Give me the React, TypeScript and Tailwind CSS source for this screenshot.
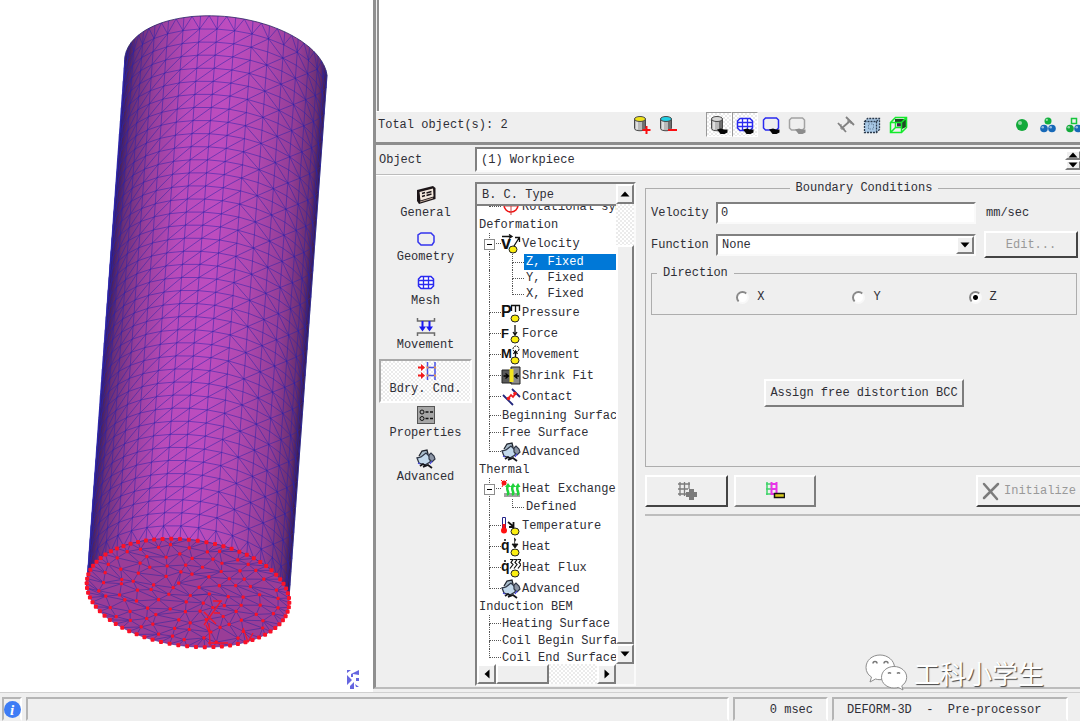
import React, { useState } from 'react';
import clsx from 'clsx';

type Point = [number, number];

const RAISED = 'border-2 border-t-white border-l-white border-r-[#7d7d7d] border-b-[#7d7d7d] bg-[#efefef]';
const SUNKEN = 'border-2 border-t-[#808080] border-l-[#808080] border-r-[#fafafa] border-b-[#fafafa]';
const DITHER = 'bg-[repeating-conic-gradient(#ffffff_0_25%,#ebebeb_0_50%)] bg-[length:4px_4px]';

/* ---------- 3D workpiece ---------- */

const ROWS = 40;
const COLS = 18;

const noise = (n: number) => {
  const v = Math.sin(n * 127.1 + 11.7) * 43758.5453;
  return v - Math.floor(v) - 0.5;
};

// h = 0 is the bottom face, h = 1 the top one
const onCylinder = (angle: number, h: number, r = 1): Point => [
  188 + 38 * h + r * (101 * Math.cos(angle) + 8 * Math.sin(angle)),
  593 - 523 * h + r * (5 * Math.cos(angle) + 54 * Math.sin(angle)),
];

const seg = (a: Point, b: Point) =>
  `M${a[0].toFixed(1)} ${a[1].toFixed(1)}L${b[0].toFixed(1)} ${b[1].toFixed(1)}`;

const outline = (points: Point[]) => `M${points.map((p) => p.map((v) => v.toFixed(1)).join(' ')).join('L')}Z`;

const arc = (h: number) => Array.from({ length: 49 }, (_, i) => onCylinder(Math.PI * (1 + i / 48), h));

const sideMesh = () => {
  const out: string[] = [];
  const at = (c: number, r: number) => onCylinder(Math.PI + (Math.PI * c) / COLS, r / ROWS);
  for (let r = 0; r < ROWS; r++) {
    for (let c = 0; c <= COLS; c++) {
      out.push(seg(at(c, r), at(c, r + 1)));
      if (c === COLS) continue;
      if (r > 0) out.push(seg(at(c, r), at(c + 1, r)));
      if (r === 0 || r === ROWS - 1) {
        const edge = r === 0 ? 0 : ROWS;
        const inner = r === 0 ? 1 : ROWS - 1;
        out.push(seg(at(c + 0.5, edge), at(c, inner)), seg(at(c + 0.5, edge), at(c + 1, inner)));
      } else if (c > 10 && (r + c) % 2 === 0) {
        out.push(seg(at(c, r + 1), at(c + 1, r)));
      } else {
        out.push(seg(at(c, r), at(c + 1, r + 1)));
      }
    }
  }
  return out.join('');
};

const RINGS = [
  { r: 1, n: 72 },
  { r: 0.87, n: 34 },
  { r: 0.7, n: 27 },
  { r: 0.53, n: 20 },
  { r: 0.36, n: 14 },
  { r: 0.19, n: 7 },
  { r: 0.02, n: 1 },
];

const ringPoints: Point[][] = RINGS.map(({ r, n }, k) =>
  Array.from({ length: n }, (_, i) => {
    const shake = k === 0 ? 0 : 1;
    const angle = ((i + shake * noise(i + k * 50) * 0.55) / n) * Math.PI * 2;
    return onCylinder(angle, 0, r + shake * noise(i * 3 + k * 91) * 0.09);
  })
);

const faceMesh = () => {
  const out: string[] = [];
  ringPoints.forEach((ring, k) => {
    ring.forEach((p, i) => out.push(seg(p, ring[(i + 1) % ring.length])));
    const inner = ringPoints[k + 1];
    if (!inner) return;
    const n = ring.length;
    const m = inner.length;
    let i = 0;
    let j = 0;
    while (i < n || j < m) {
      out.push(seg(ring[i % n], inner[j % m]));
      if ((i + 1) / n <= (j + 1) / m) i++;
      else j++;
    }
  });
  return out.join('');
};

const SIDE_OUTLINE = outline([...arc(1), ...arc(0).reverse()]);
const SIDE_MESH = sideMesh();
const FACE_MESH = faceMesh();

function Workpiece() {
  return (
    <svg width="373" height="692" viewBox="0 0 373 692" className="block" role="img" aria-label="Workpiece mesh">
      <defs>
        <linearGradient id="side" gradientUnits="userSpaceOnUse" x1="106" y1="322" x2="308" y2="337">
          <stop offset="0" stopColor="#3a1a52" />
          <stop offset="0.05" stopColor="#6b3078" />
          <stop offset="0.16" stopColor="#983f9c" />
          <stop offset="0.32" stopColor="#b84bba" />
          <stop offset="0.5" stopColor="#bd4dbf" />
          <stop offset="0.68" stopColor="#b049b0" />
          <stop offset="0.86" stopColor="#923d95" />
          <stop offset="0.96" stopColor="#6a2f70" />
          <stop offset="1" stopColor="#371a4c" />
        </linearGradient>
      </defs>
      <path d={SIDE_OUTLINE} fill="url(#side)" stroke="#2a2460" strokeWidth="0.8" />
      <path d={SIDE_MESH} fill="none" stroke="#2a22a8" strokeWidth="0.8" strokeOpacity="0.66" />
      <path d={outline(ringPoints[0])} fill="#9a3d97" />
      <path d={FACE_MESH} fill="none" stroke="#3a2a9c" strokeWidth="0.8" strokeOpacity="0.8" />
      {ringPoints.flatMap((ring, k) =>
        ring.map(([x, y], i) => (
          <rect
            key={`${k}-${i}`}
            x={x - (k ? 1.6 : 2)}
            y={y - (k ? 1.6 : 2)}
            width={k ? 3.2 : 4}
            height={k ? 3.2 : 4}
            rx="1"
            fill="#fb1128"
          />
        ))
      )}
      <path
        d="M210 646L209 623M204 612l12 12M204 625l17-24M213 601h9M214 613h6M208 643h20M243 628l5 14 5-9M209 632l-3-7"
        fill="none"
        stroke="#f3142c"
        strokeWidth="1.3"
      />
      <path
        d="M347 670h4l-4 3zM359 670v5l-6-1v3h-2v-3zM347 675l5 5-5 5zM356 678h3v3h-3zM354 682v7h-4v-3zM355 684l4 3h-3z"
        fill="#6666e0"
      />
    </svg>
  );
}

/* ---------- icons ---------- */

const Icon = ({ children }: { children: React.ReactNode }) => (
  <svg width="20" height="20" viewBox="0 0 20 20" fill="none" className="block shrink-0" aria-hidden="true">
    {children}
  </svg>
);

const Drum = ({ top }: { top: string }) => (
  <>
    <path d="M2.500 4v9.500c0 3 11 3 11 0V4z" fill="#b9b9b9" stroke="#4a4a4a" />
    <path d="M10 6v9l3-1V5z" fill="#6f6f6f" />
    <path d="M5 6.500v8" stroke="#eee" strokeWidth="1.500" />
    <ellipse cx="8" cy="4" rx="5.500" ry="2.500" fill={top} stroke="#4a4a4a" />
  </>
);

const Eye = ({ color = '#050505' }: { color?: string }) => (
  <path d="M8 14.500l4-1 3 1h3.500v3l-3 1.500h-4l-1.500-2z" fill={color} />
);

const RoundBox = ({ color }: { color: string }) => (
  <path d="M4.500 3h11l2 2v8l-2 2h-11l-2-2V5z" stroke={color} strokeWidth="1.500" />
);

const GridBox = () => (
  <>
    <path d="M5 3.500h10l2.500 2.500v7L15 15.500H5L2.500 13V6z" stroke="#2a2af0" strokeWidth="1.500" fill="#fff" />
    <path d="M2.500 7.500h15M2.500 11.500h15M7.500 3.500v12M12.500 3.500v12" stroke="#2a2af0" strokeWidth="1.300" />
  </>
);

const Ball = ({ x, y, r, color }: { x: number; y: number; r: number; color: string }) => (
  <>
    <circle cx={x} cy={y} r={r} fill={color} />
    <circle cx={x - r / 3} cy={y - r / 3} r={r / 3} fill="#fff" fillOpacity="0.55" />
  </>
);

const AddObjectIcon = () => (
  <Icon><Drum top="#efe21a" /><path d="M14.500 11v8M10.500 15h8" stroke="#fb0d10" strokeWidth="2" /></Icon>
);
const RemoveObjectIcon = () => (
  <Icon><Drum top="#22cfe4" /><path d="M10 15h9" stroke="#fb0d10" strokeWidth="2" /></Icon>
);
const ShowObjectIcon = () => <Icon><Drum top="#d8d8d8" /><Eye /></Icon>;
const ShowMeshIcon = () => <Icon><GridBox /><Eye /></Icon>;
const ShowGeometryIcon = () => <Icon><RoundBox color="#2a2af0" /><Eye /></Icon>;
const ShowNoneIcon = () => <Icon><RoundBox color="#a3a3a3" /><Eye color="#8c8c8c" /></Icon>;
const ContactLinesIcon = () => (
  <Icon><path d="M2 8l8 9M10 2l8 8M6 13l8-7" stroke="#828282" strokeWidth="1.800" /><path d="M5 9v5h4M11 6h4v3" stroke="#828282" /></Icon>
);
const SolidBoxIcon = () => (
  <Icon>
    <path d="M2.500 6.500l3-3h12v11l-3 3h-12z" fill="#a9c9e6" />
    <path d="M2.500 6.500l3-3h12v11l-3 3h-12zM2.500 6.500h12v11M14.500 6.500l3-3" stroke="#2b3a4c" strokeWidth="1.300" strokeDasharray="2 1" />
    <path d="M6.500 10v4h5V9h-5" stroke="#6b86a0" strokeDasharray="1.500 1" />
  </Icon>
);
const WireBoxIcon = () => (
  <Icon>
    <path d="M7 4h11v8l-4 2V8H7z" fill="#1d4a25" />
    <path d="M9 7.500h6l-1 4H9z" fill="#4b1b53" />
    <path d="M2.500 7.500l5-5h11v10l-5 5h-11zM2.500 7.500h11v10M13.500 7.500l5-5M7.500 8v4.500h6M7.500 12.500l-5 5" stroke="#13ea2b" strokeWidth="1.500" />
  </Icon>
);
const OneBallIcon = () => <Icon><Ball x={10} y={10} r={6} color="#12a93a" /></Icon>;
const ThreeBallsIcon = () => (
  <Icon><Ball x={10} y={6} r={3.5} color="#12b03c" /><Ball x={6} y={13.5} r={3.8} color="#1769b8" /><Ball x={14} y={13.5} r={3.8} color="#1769b8" /></Icon>
);
const BallSquareIcon = () => (
  <Icon>
    <rect x="7.500" y="3.500" width="5" height="5" stroke="#16c53d" strokeWidth="1.500" />
    <Ball x={6} y={13.5} r={3.8} color="#12a93a" /><Ball x={14} y={13.5} r={3.8} color="#1769b8" />
  </Icon>
);

const GeneralIcon = () => (
  <Icon>
    <path d="M1 5L17 1l2.500 2v11L3 19l-2-3z" fill="#1c1518" />
    <path d="M3.500 7L17 3.500l.5 8L4.500 15.500z" fill="#f4e8dc" />
    <path d="M6 8.500l3-1M10.500 8l5-1.500M6 11.500l3-1M10.500 10.500l5-1.500" stroke="#1c1518" strokeWidth="1.500" />
    <path d="M4 17l13-4" stroke="#bda89a" />
  </Icon>
);
const GeometryIcon = () => <Icon><path d="M5 4h10l3 3v6l-2 3H5l-3-3V6z" stroke="#3434ee" strokeWidth="1.500" /></Icon>;
const MeshIcon = () => <Icon><GridBox /></Icon>;
const MovementIcon = () => (
  <Icon>
    <path d="M1.500 1v3h17V1M1.500 19v-3h17v3" stroke="#6b6b6b" strokeWidth="1.500" />
    <path d="M6.500 4v7M13.500 4v7" stroke="#1a1af0" strokeWidth="2" />
    <path d="M3 9.500h7l-3.500 5zM10 9.500h7l-3.500 5z" fill="#1a1af0" />
  </Icon>
);
const BoundaryIcon = () => (
  <Icon>
    <path d="M2 6.500h4M2 14.500h4" stroke="#f21a1a" strokeWidth="2" />
    <path d="M5 3l4 3.500L5 10zM5 11l4 3.500L5 18z" fill="#f21a1a" />
    <path d="M11.500 1v18M19 1v18M11.500 6.500H19M11.500 14.500H19" stroke="#4750e6" strokeWidth="1.500" />
    <path d="M10.500 5.500h2v2h-2zM18 5.500h2v2h-2zM10.500 13.500h2v2h-2zM18 13.500h2v2h-2z" fill="#e7984d" />
  </Icon>
);
const PropertiesIcon = () => (
  <Icon>
    <rect x="1.500" y="1.500" width="17" height="17" fill="#a6a6a6" stroke="#555" />
    <circle cx="6" cy="7" r="2" stroke="#111" /><circle cx="6" cy="13.500" r="2" stroke="#111" />
    <path d="M9.500 7h3M14 7h3M9.500 13.500h3M14 13.500h3" stroke="#111" strokeWidth="1.300" />
  </Icon>
);
const AdvancedIcon = () => (
  <Icon>
    <path d="M3 7l3-5 5-1 1 4-3 3" fill="#a9bdcc" stroke="#22262f" strokeWidth="1.300" />
    <path d="M1 9l4-1 5-4 5 5-1 4-5 3-6-2z" fill="#c3d9ec" stroke="#2f3747" strokeWidth="1.300" />
    <path d="M13 6l2-2 3 3 1 3-3 3-3-3z" fill="#8b94a4" stroke="#2f3747" strokeWidth="1.200" />
    <path d="M4 17l3-2 3 2M7 18l5-2 4 3" stroke="#16161c" strokeWidth="1.800" />
    <path d="M16 12l-2 3M2 14l2 1" stroke="#3f41dd" strokeWidth="1.300" />
  </Icon>
);

const NodeDot = ({ x = 14 }: { x?: number }) => (
  <ellipse cx={x} cy="15.500" rx="4" ry="3.500" fill="#fbee10" stroke="#222" />
);
const Letter = ({ x = 0, y = 14, size = 15, children }: { x?: number; y?: number; size?: number; children: string }) => (
  <text x={x} y={y} fontFamily="Liberation Sans, sans-serif" fontWeight="bold" fontSize={size} fill="#111">{children}</text>
);

const VelocityIcon = () => (
  <Icon>
    <path d="M1 2.500h9M8 .5l3 2-3 2M13 12l5-8M14 3.500h4.500V8" stroke="#111" strokeWidth="1.300" />
    <Letter y={15} size={18}>v</Letter><NodeDot x={12} />
  </Icon>
);
const PressureIcon = () => (
  <Icon><Letter size={16}>P</Letter><path d="M10.500 8V2.500h8V8M14.500 2.500V9" stroke="#111" strokeWidth="1.300" /><NodeDot /></Icon>
);
const ForceIcon = () => (
  <Icon><Letter size={13}>F</Letter><path d="M14 1v9M12 8l2 3 2-3" stroke="#111" strokeWidth="1.300" /><NodeDot /></Icon>
);
const MovementBcIcon = () => (
  <Icon>
    <Letter size={13} y={13}>M</Letter>
    <circle cx="15" cy="4" r="3" stroke="#111" strokeDasharray="2 1" />
    <path d="M14.500 13V6.500M12.500 9l2-3 2 3" stroke="#111" strokeWidth="1.300" /><NodeDot />
  </Icon>
);
const ShrinkIcon = () => (
  <Icon>
    <path d="M1 4h9v13H1z" fill="#5a5a5a" stroke="#222" /><path d="M10 1h9v17h-9z" fill="#8a8a8a" stroke="#222" />
    <path d="M8.500 3h4v13h-4z" fill="#f4e51e" />
    <path d="M2.500 10h4M4.500 7.500l3 2.500-3 2.500M18 10h-3M16.500 7.500l-3 2.500 3 2.500" stroke="#000" strokeWidth="1.300" />
  </Icon>
);
const ContactIcon = () => (
  <Icon>
    <path d="M2 8l10 10M11 2l8 8" stroke="#22267c" strokeWidth="1.800" />
    <path d="M7 12l3-4 2 2 3-4" stroke="#f01e1e" strokeWidth="1.800" />
    <circle cx="7.500" cy="11.500" r="1.800" fill="#f01e1e" /><circle cx="14" cy="6.500" r="1.800" fill="#f01e1e" />
  </Icon>
);
const HeatExchangeIcon = () => (
  <Icon>
    <path d="M3 14h16v4H3z" fill="#a2a2a2" />
    <path d="M6 16c4-2-2-5 1-9M11 16c4-2-2-5 1-9M16 16c4-2-2-5 1-9" stroke="#1ed33a" strokeWidth="2.500" />
    <path d="M4 8l3-4 3 4zM9.500 8l2.500-4 3 4zM14.500 8L17 4l2.500 4z" fill="#1ed33a" />
    <circle cx="3" cy="4" r="2.500" fill="#f61515" /><path d="M0 1l2 2M6 1L4 3M1 8l1-2" stroke="#f61515" />
  </Icon>
);
const TemperatureIcon = () => (
  <Icon>
    <path d="M1.500 1.500h3V12h-3z" fill="#fff" stroke="#26268a" /><path d="M1.500 8h3v5h-3z" fill="#f11" />
    <circle cx="3" cy="14.500" r="3" fill="#f11" /><path d="M7 6l6 5M12.500 6v5H8" stroke="#111" strokeWidth="1.800" /><NodeDot />
  </Icon>
);
const HeatIcon = () => (
  <Icon>
    <Letter size={14} y={13}>q</Letter><path d="M3 3h2" stroke="#111" strokeWidth="1.500" />
    <path d="M13 1c4 2-1 3 1 6v3M11 7h6l-3 4z" stroke="#111" fill="#111" strokeWidth=".8" /><NodeDot />
  </Icon>
);
const HeatFluxIcon = () => (
  <Icon>
    <Letter size={14} y={13}>q</Letter><path d="M3 3h2" stroke="#111" strokeWidth="1.500" />
    <path d="M9 1.500h3l-2 3 2 2-3 4M13 1.500h3l-2 3 2 2-3 4M17 1.500h3l-2 3 2 2-3 4" stroke="#111" strokeWidth="1.200" /><NodeDot />
  </Icon>
);
const RotationalIcon = () => (
  <Icon><circle cx="10" cy="8" r="7" stroke="#e11" strokeWidth="1.500" /><path d="M10 3v15M3 9h14" stroke="#c44" /></Icon>
);
const AddBccIcon = () => (
  <Icon>
    <path d="M1 3h12M1 8h10M1 13h8M3 1v14M7.500 1v14M12 1v7" stroke="#7b7b7b" strokeWidth="1.300" />
    <path d="M12 8h5v3h3v5h-3v3h-5v-3H9v-5h3z" fill="#7b7b7b" />
  </Icon>
);
const RemoveBccIcon = () => (
  <Icon>
    <path d="M1 3h5M1 8h5M1 13h5M2 1v13" stroke="#3fd46a" strokeWidth="1.500" />
    <path d="M5.500 3h7M5.500 8h7M5.500 13h4M6.500 1v13M11.500 1v11" stroke="#e834e8" strokeWidth="2" />
    <rect x="9.500" y="12.500" width="10" height="4" fill="#d8cb1e" stroke="#111" strokeWidth="1.500" />
  </Icon>
);
const CrossIcon = () => (
  <Icon><path d="M3 3l13 15M17 3L3 17" stroke="#7c7c7c" strokeWidth="2.500" strokeLinecap="round" /></Icon>
);

const Arrow = ({ d }: { d: string }) => (
  <svg width="10" height="10" viewBox="0 0 10 10" className="block" aria-hidden="true"><path d={d} fill="#000" /></svg>
);
const UP = 'M5 2.500l4.500 5h-9z';
const DOWN = 'M5 7.500l4.500-5h-9z';
const LEFT = 'M2.500 5l5-4.500v9z';
const RIGHT = 'M7.500 5l-5-4.500v9z';

/* ---------- toolbar ---------- */

const TOOL_GROUPS = [
  {
    space: 'mr-[25px]',
    tools: [
      { label: 'Insert object', icon: <AddObjectIcon /> },
      { label: 'Delete object', icon: <RemoveObjectIcon /> },
    ],
  },
  {
    space: 'mr-[23px]',
    tools: [
      { label: 'Show object', icon: <ShowObjectIcon />, pressed: true },
      { label: 'Show mesh', icon: <ShowMeshIcon />, pressed: true },
      { label: 'Show geometry', icon: <ShowGeometryIcon /> },
      { label: 'Hide object', icon: <ShowNoneIcon /> },
    ],
  },
  {
    space: 'mr-[98px]',
    tools: [
      { label: 'Show contact', icon: <ContactLinesIcon /> },
      { label: 'Shaded view', icon: <SolidBoxIcon /> },
      { label: 'Backface', icon: <WireBoxIcon /> },
    ],
  },
  {
    space: '-mr-[7px]',
    tools: [
      { label: 'Single object', icon: <OneBallIcon /> },
      { label: 'Multi object', icon: <ThreeBallsIcon /> },
      { label: 'User mode', icon: <BallSquareIcon /> },
    ],
  },
];

function Toolbar() {
  return (
    <div className="flex h-[29px] items-center border-t border-white pb-[3px] pl-[2px]">
      <span className="mr-auto">Total object(s): 2</span>
      {TOOL_GROUPS.map((group) => (
        <div key={group.space} className={clsx('flex', group.space)}>
          {group.tools.map((tool) => (
            <button
              key={tool.label}
              aria-label={tool.label}
              className={clsx(
                'flex h-[25px] w-[26px] shrink-0 items-center justify-center border',
                tool.pressed ? `border-t-[#999] border-l-[#999] border-r-white border-b-white ${DITHER}` : 'border-transparent'
              )}
            >
              {tool.icon}
            </button>
          ))}
        </div>
      ))}
    </div>
  );
}

/* ---------- left navigation ---------- */

const NAV = [
  { label: 'General', icon: <GeneralIcon /> },
  { label: 'Geometry', icon: <GeometryIcon /> },
  { label: 'Mesh', icon: <MeshIcon /> },
  { label: 'Movement', icon: <MovementIcon /> },
  { label: 'Bdry. Cnd.', icon: <BoundaryIcon /> },
  { label: 'Properties', icon: <PropertiesIcon /> },
  { label: 'Advanced', icon: <AdvancedIcon /> },
];

function SideNav() {
  const [active, setActive] = useState('Bdry. Cnd.');
  return (
    <nav className="flex w-[93px] shrink-0 flex-col pt-[5px]">
      {NAV.map((item) => (
        <button
          key={item.label}
          onClick={() => setActive(item.label)}
          className={clsx(
            'flex h-[44px] flex-col items-center border-2 leading-4',
            active === item.label
              ? `border-t-[#a8a8a8] border-l-[#a8a8a8] border-r-white border-b-white ${DITHER}`
              : 'border-transparent'
          )}
        >
          {item.icon}
          {item.label}
        </button>
      ))}
    </nav>
  );
}

/* ---------- boundary condition tree ---------- */

type Row = {
  id: string;
  label: string;
  level: 0 | 1 | 2;
  icon?: React.ReactNode;
  open?: boolean;
  last?: boolean;
};

const TREE: Row[] = [
  { id: 'rot', label: 'Rotational sym', level: 1, icon: <RotationalIcon />, last: true },
  { id: 'def', label: 'Deformation', level: 0 },
  { id: 'vel', label: 'Velocity', level: 1, icon: <VelocityIcon />, open: true },
  { id: 'vz', label: 'Z, Fixed', level: 2 },
  { id: 'vy', label: 'Y, Fixed', level: 2 },
  { id: 'vx', label: 'X, Fixed', level: 2, last: true },
  { id: 'prs', label: 'Pressure', level: 1, icon: <PressureIcon /> },
  { id: 'frc', label: 'Force', level: 1, icon: <ForceIcon /> },
  { id: 'mov', label: 'Movement', level: 1, icon: <MovementBcIcon /> },
  { id: 'shr', label: 'Shrink Fit', level: 1, icon: <ShrinkIcon /> },
  { id: 'con', label: 'Contact', level: 1, icon: <ContactIcon /> },
  { id: 'beg', label: 'Beginning Surface', level: 1 },
  { id: 'fre', label: 'Free Surface', level: 1 },
  { id: 'adv', label: 'Advanced', level: 1, icon: <AdvancedIcon />, last: true },
  { id: 'thm', label: 'Thermal', level: 0 },
  { id: 'hex', label: 'Heat Exchange', level: 1, icon: <HeatExchangeIcon />, open: true },
  { id: 'dfd', label: 'Defined', level: 2, last: true },
  { id: 'tmp', label: 'Temperature', level: 1, icon: <TemperatureIcon /> },
  { id: 'hea', label: 'Heat', level: 1, icon: <HeatIcon /> },
  { id: 'flx', label: 'Heat Flux', level: 1, icon: <HeatFluxIcon /> },
  { id: 'adt', label: 'Advanced', level: 1, icon: <AdvancedIcon />, last: true },
  { id: 'ind', label: 'Induction BEM', level: 0 },
  { id: 'hts', label: 'Heating Surface', level: 1 },
  { id: 'cbs', label: 'Coil Begin Surface', level: 1 },
  { id: 'ces', label: 'Coil End Surface', level: 1, last: true },
];

const Branch = ({ last, open }: { last?: boolean; open?: boolean }) => (
  <span className="relative ml-3 flex w-3 shrink-0 flex-col self-stretch">
    <span className="flex-1 border-b border-l border-dotted border-[#555]" />
    <span className={clsx('flex-1 border-l border-dotted', last ? 'border-transparent' : 'border-[#555]')} />
    {open && (
      <span className="absolute top-[6px] -left-[5px] flex size-[11px] items-center border border-[#8c8c8c] bg-white px-[2px]">
        <span className="h-px w-full bg-black" />
      </span>
    )}
  </span>
);

function TreeRow({ row, selected, onSelect }: { row: Row; selected: boolean; onSelect: () => void }) {
  return (
    <li className={clsx('flex shrink-0 items-center', row.icon ? 'h-[21px]' : row.level === 1 ? 'h-[17px]' : 'h-[16px]')}>
      {row.level === 2 && <span className="ml-3 w-[11px] shrink-0 self-stretch border-l border-dotted border-[#555]" />}
      {row.level > 0 && <Branch last={row.last} open={row.open} />}
      {row.icon}
      <button
        onClick={onSelect}
        className={clsx(
          'h-full flex-1 text-left whitespace-nowrap',
          row.level === 1 ? 'pl-px' : 'pl-[2px]',
          selected && 'bg-[#0078d7] text-white'
        )}
      >
        {row.label}
      </button>
    </li>
  );
}

function ConditionTree() {
  const [selected, setSelected] = useState('vz');
  return (
    <section className={clsx('ml-[3px] mt-1 mb-px flex w-[161px] shrink-0 flex-col', SUNKEN)}>
      <div className="flex min-h-0 flex-1">
        <div className="flex min-w-0 flex-1 flex-col">
          <h2 className="h-[22px] shrink-0 border-b-2 border-[#808080] pl-[5px] leading-[22px]">B. C. Type</h2>
          <div className="min-h-0 flex-1 overflow-hidden bg-white">
            <ul className="-mt-[10px] flex flex-col leading-4">
              {TREE.map((row) => (
                <TreeRow key={row.id} row={row} selected={selected === row.id} onSelect={() => setSelected(row.id)} />
              ))}
            </ul>
          </div>
        </div>
        <div className="flex w-[18px] shrink-0 flex-col">
          <button aria-label="Scroll up" className={clsx('flex h-[20px] items-center justify-center', RAISED)}><Arrow d={UP} /></button>
          <div className={clsx('h-[41px]', DITHER)} />
          <div className={clsx('flex-1', RAISED)} />
          <button aria-label="Scroll down" className={clsx('flex h-[20px] items-center justify-center', RAISED)}><Arrow d={DOWN} /></button>
        </div>
      </div>
      <div className="flex h-[20px] shrink-0 pr-[18px]">
        <button aria-label="Scroll left" className={clsx('flex w-[19px] items-center justify-center', RAISED)}><Arrow d={LEFT} /></button>
        <div className={clsx('w-[53px]', RAISED)} />
        <div className={clsx('flex-1', DITHER)} />
        <button aria-label="Scroll right" className={clsx('flex w-[19px] items-center justify-center', RAISED)}><Arrow d={RIGHT} /></button>
      </div>
    </section>
  );
}

/* ---------- boundary condition form ---------- */

const ETCHED = 'border border-[#adadad]';
const DISABLED = 'border-2 border-t-white border-l-white border-r-[#444] border-b-[#444] text-[#999]';

function ConditionForm() {
  const [velocity, setVelocity] = useState('0');
  const [direction, setDirection] = useState('Z');

  return (
    <section className="ml-[9px] flex min-w-0 flex-1 flex-col pt-[2px]">
      <fieldset className={clsx('-mr-[3px] flex h-[287px] shrink-0 flex-col px-[5px]', ETCHED)}>
        <legend className="mx-auto px-[6px] leading-4">Boundary Conditions</legend>
        <div className="grid grid-cols-[65px_1fr_101px] items-center gap-y-[7px] pt-[6px]">
          <label htmlFor="velocity">Velocity</label>
          <input
            id="velocity"
            value={velocity}
            onChange={(e) => setVelocity(e.target.value)}
            className={clsx('h-[22px] min-w-0 bg-white px-[3px] outline-none', SUNKEN)}
          />
          <span className="pl-[10px]">mm/sec</span>

          <label htmlFor="function">Function</label>
          <div className="relative">
            <select id="function" className={clsx('block h-[22px] w-full appearance-none bg-white px-1 outline-none', SUNKEN)}>
              <option>None</option>
              <option>Constant</option>
            </select>
            <span className={clsx('pointer-events-none absolute top-[2px] right-[2px] flex h-[18px] w-[18px] items-center justify-center', RAISED)}>
              <Arrow d={DOWN} />
            </span>
          </div>
          <button disabled className={clsx('-mr-px ml-[8px] h-[27px]', DISABLED)}>Edit...</button>
        </div>

        <fieldset className={clsx('mt-[7px] h-[50px] pl-[5px]', ETCHED)}>
          <legend className="px-[6px] leading-4">Direction</legend>
          <div className="flex justify-center gap-[88px] pt-[8px]">
            {['X', 'Y', 'Z'].map((axis) => (
              <label key={axis} className="flex items-center gap-2 leading-4">
                <input
                  type="radio"
                  name="direction"
                  checked={direction === axis}
                  onChange={() => setDirection(axis)}
                  className="size-[13px] appearance-none rounded-full border-2 border-t-[#888] border-l-[#888] border-r-[#f8f8f8] border-b-[#f8f8f8] bg-white checked:bg-[radial-gradient(circle,#000_0_2px,#fff_3px)]"
                />
                {axis}
              </label>
            ))}
          </div>
        </fieldset>

        <button className={clsx('mt-[64px] h-[28px] self-center px-[4px]', RAISED)}>Assign free distortion BCC</button>
      </fieldset>

      <div className="-mr-[4px] mt-2 flex shrink-0 border-b-2 border-[#bdbdbd] pb-[7px]">
        <button aria-label="Add boundary condition" disabled className={clsx('mr-[6px] flex h-[32px] w-[83px] items-center justify-center', DISABLED)}>
          <AddBccIcon />
        </button>
        <button aria-label="Delete boundary condition" className={clsx('flex h-[32px] w-[82px] items-center justify-center', RAISED)}>
          <RemoveBccIcon />
        </button>
        <button disabled className={clsx('ml-auto flex h-[32px] w-[108px] items-center gap-[3px] pl-[3px]', DISABLED)}>
          <CrossIcon />
          Initialize
        </button>
      </div>
    </section>
  );
}

/* ---------- status bar ---------- */

const STATUS = 'border-2 border-t-[#b5b5b5] border-l-[#b5b5b5] border-r-white border-b-transparent';

function StatusBar() {
  return (
    <footer className="flex h-[28px] shrink-0 gap-1 pt-1 pr-[12px] leading-[22px]">
      <div className={clsx('ml-[2px] flex w-[20px] items-center', STATUS)}>
        <svg width="17" height="17" viewBox="0 0 17 17" className="shrink-0" aria-label="Information">
          <circle cx="8.500" cy="8.500" r="8.500" fill="#3d7cf5" />
          <text x="6" y="14" fontFamily="Liberation Serif, serif" fontStyle="italic" fontWeight="bold" fontSize="15" fill="#fff">i</text>
        </svg>
      </div>
      <div className={clsx('flex-1', STATUS)} />
      <div className={clsx('w-[95px] pr-[13px] text-right', STATUS)}>0 msec</div>
      <div className={clsx('w-[236px] pl-[13px] whitespace-pre', STATUS)}>{'DEFORM-3D  -  Pre-processor'}</div>
    </footer>
  );
}

function Watermark() {
  return (
    <div className="pointer-events-none absolute right-[36px] bottom-0 flex items-center gap-[6px]">
      <svg width="43" height="38" viewBox="0 0 43 38" aria-hidden="true">
        <g fill="#fff" stroke="#8d8d8d" strokeWidth="1">
          <path d="M15 1C7 1 1 6.500 1 13.500c0 4 2 7.500 5.500 9.500L5 28l5.500-3c1.500.5 3 .7 4.500.7 8 0 14.500-5.500 14.500-12.200S23 1 15 1z" />
          <path d="M29 12.500c-7 0-12.500 4.800-12.500 10.800S22 34 29 34c1.500 0 3-.2 4.300-.6L38 36l-1.200-4.200c3-2 4.900-5 4.900-8.500 0-6-5.700-10.800-12.700-10.800z" />
        </g>
        <path d="M8 9.500a2 2 0 0 1 4 0M19 9.500a2 2 0 0 1 4 0M23 19.500a2 2 0 0 1 3 0M32 19.500a2 2 0 0 1 3 0" fill="none" stroke="#777" strokeWidth="1.500" />
      </svg>
      <span className="font-['Noto_Sans_CJK_SC',sans-serif] text-[26px] leading-[38px] text-white [text-shadow:1px_1px_1px_#444]">
        工科小学生
      </span>
    </div>
  );
}

export default function App() {
  return (
    <div className="flex h-screen flex-col overflow-hidden bg-[#efefef] font-['Liberation_Mono',monospace] text-[12px] text-[#2e2e36]">
      <div className="relative flex min-h-0 flex-1 border-b border-[#d0d0d0]">
        <main className="w-[373px] shrink-0 overflow-hidden bg-white">
          <Workpiece />
        </main>
        <div className="mb-[3px] flex min-w-0 flex-1 flex-col overflow-hidden border-b-2 border-l-[3px] border-b-[#bcbcbc] border-l-[#8f8f8f]">
          <div className="ml-px h-[111px] shrink-0 border-l-2 border-[#8f8f8f] bg-white" />
          <Toolbar />
          <div className="mt-[2px] flex h-[33px] shrink-0 items-center border-t-[3px] border-b border-t-[#8d8d8d] border-b-[#bcbcbc] pl-[3px]">
            <label htmlFor="object" className="w-[96px] shrink-0">Object</label>
            <div className="relative -mr-[2px] flex-1">
              <select id="object" className={clsx('block h-[25px] w-full appearance-none bg-white px-1 outline-none', SUNKEN)}>
                <option>(1) Workpiece</option>
                <option>(2) Coil</option>
              </select>
              <div className="absolute top-[3px] right-[1px] flex w-[16px] flex-col">
                <button aria-label="Previous object" className={clsx('flex h-[10px] items-center justify-center', RAISED)}><Arrow d={UP} /></button>
                <button aria-label="Next object" className={clsx('flex h-[10px] items-center justify-center', RAISED)}><Arrow d={DOWN} /></button>
              </div>
            </div>
          </div>
          <div className="flex min-h-0 flex-1 border-t border-white pt-[2px] pl-[3px]">
            <SideNav />
            <ConditionTree />
            <ConditionForm />
          </div>
        </div>
        <Watermark />
      </div>
      <StatusBar />
    </div>
  );
}
